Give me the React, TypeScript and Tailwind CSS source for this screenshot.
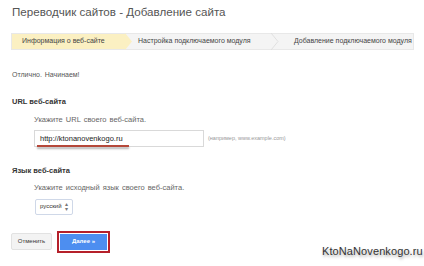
import React from "react";

export default function App() {
  return (
    <div className="w-[424px] h-[266px] bg-white relative overflow-hidden" style={{ fontFamily: '"Liberation Sans", Arial, sans-serif' }}>
      <div className="pl-[12px] pt-[4px]">
        <div className="text-[11.6px] leading-[16px] text-[#555]">Переводчик сайтов - Добавление сайта</div>
      </div>
      {/* tabs */}
      <div className="ml-[11px] mt-[13px] w-[403px] h-[17px] flex bg-[#f4f4f4] border border-[#e8e8e8] text-[7px] text-[#444]">
        <div className="relative w-[114px] h-full bg-[#fbf0c2] flex items-center pl-[10px]">
          Информация о веб-сайте
          <svg className="absolute -right-[6px] top-[-1px]" width="7" height="17" viewBox="0 0 7 17">
            <polygon points="0,0 7,8.5 0,17" fill="#fbf0c2" />
          </svg>
        </div>
        <div className="relative w-[153px] h-full flex items-center pl-[12px]">
          Настройка подключаемого модуля
          <svg className="absolute -right-[0px] top-[-1px]" width="8" height="17" viewBox="0 0 8 17">
            <polyline points="0,0 7,8.5 0,17" fill="none" stroke="#e0e0e0" strokeWidth="1" />
          </svg>
        </div>
        <div className="flex-1 h-full flex items-center pl-[15px]">Добавление подключаемого модуля</div>
      </div>
      <div className="pl-[12px] pt-[20px] text-[7px] text-[#555] [word-spacing:1px]">Отлично. Начинаем!</div>
      <div className="pl-[12px] pt-[15px] text-[7.5px] font-bold text-[#333]">URL веб-сайта</div>
      <div className="pl-[34px] pt-[7px] text-[7.5px] text-[#666] [word-spacing:1px]">Укажите URL своего веб-сайта.</div>
      <div className="pl-[34px] pt-[5px] flex items-center">
        <div className="relative w-[170px] h-[17px] border border-[#d9d9d9] bg-white flex items-center pl-[5px] text-[7.5px] text-[#222]">
          http://ktonanovenkogo.ru
          <div className="absolute left-[2px] top-[14px] w-[92px] h-[2px] bg-[#b5483a] shadow-[0_2px_2px_rgba(0,0,0,0.3)]" />
        </div>
        <div className="ml-[4px] text-[5.5px] text-[#999]">(например, www.example.com)</div>
      </div>
      <div className="pl-[12px] pt-[18px] text-[7.5px] font-bold text-[#333]">Язык веб-сайта</div>
      <div className="pl-[34px] pt-[6px] text-[7.5px] text-[#666] [word-spacing:1px]">Укажите исходный язык своего веб-сайта.</div>
      <div className="pl-[35px] pt-[5px]">
        <div className="w-[38px] h-[16px] border border-[#cfd8e8] rounded-[2px] bg-white flex items-center justify-between px-[4px] text-[6px] text-[#333]">
          <span>русский</span>
          <span className="text-[6px] leading-[5px] text-[#777] flex flex-col"><span>▴</span><span>▾</span></span>
        </div>
      </div>
      <div className="pl-[11px] pt-[16px] flex items-center gap-[5px]">
        <div className="w-[41px] h-[17px] bg-[#f3f3f3] border border-[#e2e2e2] rounded-[2px] flex items-center justify-center text-[6px] text-[#333]">Отменить</div>
        <div className="border-[2px] border-[#b5202a] p-[1px]">
          <div className="w-[47px] h-[16px] bg-[#4d8ef0] flex items-center justify-center text-[6px] font-bold text-white">Далее »</div>
        </div>
      </div>
      <div className="absolute left-[322px] top-[243px] text-[11px] text-[#333] tracking-[0.1px]" style={{ textShadow: "1px 2px 3px rgba(0,0,0,0.35)" }}>KtoNaNovenkogo.ru</div>
    </div>
  );
}
